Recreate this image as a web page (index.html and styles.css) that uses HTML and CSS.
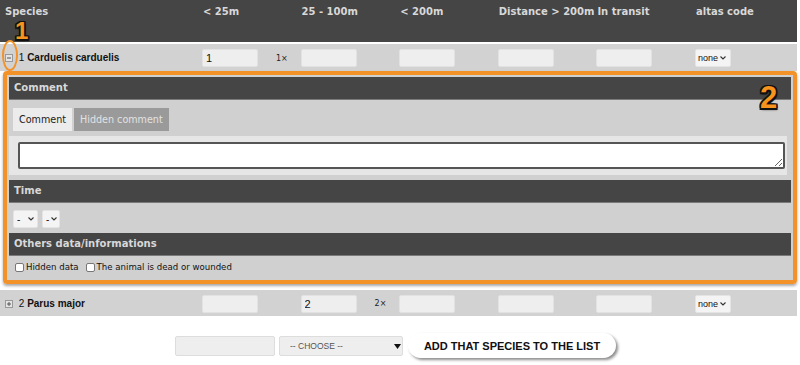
FILE: index.html
```html
<!DOCTYPE html>
<html lang="en">
<head>
    <meta charset="UTF-8">
    <meta name="viewport" content="width=device-width, initial-scale=1.0">
    <title>Species observations</title>
    <link rel="stylesheet" href="styles.css">
</head>
<body>

    <div class="page">
        <table class="species-table">
            <colgroup>
                <col class="col-name">
                <col class="col-num"><col class="col-num"><col class="col-num">
                <col class="col-num"><col class="col-num"><col class="col-code">
            </colgroup>
            <thead>
                <tr>
                    <th class="th-name">Species</th>
                    <th>&lt; 25m</th>
                    <th>25 - 100m</th>
                    <th>&lt; 200m</th>
                    <th>Distance &gt; 200m</th>
                    <th>In transit</th>
                    <th>altas code</th>
                </tr>
            </thead>
            <tbody>
                <tr class="species-row row-open">
                    <td class="name">
                        <svg class="toggle" width="8" height="8" viewBox="0 0 8 8"><rect x="0.5" y="0.5" width="7" height="7" fill="#e4e4e4" stroke="#999"/><path d="M2 4h4" stroke="#555"/></svg>
                        <span class="num">1</span> <b>Carduelis carduelis</b>
                    </td>
                    <td><input class="count" type="text" value="1"><span class="times">1×</span></td>
                    <td><input class="count" type="text"></td>
                    <td><input class="count" type="text"></td>
                    <td><input class="count" type="text"></td>
                    <td><input class="count" type="text"></td>
                    <td>
                        <span class="select-box code-select">
                            <select><option>none</option></select>
                            <svg class="chev" width="6" height="4" viewBox="0 0 6 4"><path d="M0.5 0.5 3 3 5.5 0.5" fill="none" stroke="#333" stroke-width="1.1"/></svg>
                        </span>
                    </td>
                </tr>
                <tr class="detail-row">
                    <td colspan="7">
                        <div class="detail">
                            <div class="detail-inner">
                                <div class="section-head">Comment</div>
                                <div class="tabs">
                                    <span class="tab tab-active">Comment</span>
                                    <span class="tab">Hidden comment</span>
                                </div>
                                <div class="comment-box">
                                    <textarea class="comment"></textarea>
                                </div>

                                <div class="section-head section-gap">Time</div>
                                <div class="time-row">
                                    <span class="select-box time-hour">
                                        <select><option>-</option></select>
                                        <svg class="chev" width="6" height="4" viewBox="0 0 6 4"><path d="M0.5 0.5 3 3 5.5 0.5" fill="none" stroke="#333" stroke-width="1.1"/></svg>
                                    </span>
                                    <span class="select-box time-min">
                                        <select><option>-</option></select>
                                        <svg class="chev" width="6" height="4" viewBox="0 0 6 4"><path d="M0.5 0.5 3 3 5.5 0.5" fill="none" stroke="#333" stroke-width="1.1"/></svg>
                                    </span>
                                </div>

                                <div class="section-head">Others data/informations</div>
                                <div class="check-row">
                                    <label><input type="checkbox">Hidden data</label>
                                    <label><input type="checkbox">The animal is dead or wounded</label>
                                </div>
                            </div>
                        </div>
                    </td>
                </tr>
                <tr class="species-row">
                    <td class="name">
                        <svg class="toggle" width="8" height="8" viewBox="0 0 8 8"><rect x="0.5" y="0.5" width="7" height="7" fill="#e4e4e4" stroke="#999"/><path d="M2 4h4M4 2v4" stroke="#555"/></svg>
                        <span class="num">2</span> <b>Parus major</b>
                    </td>
                    <td><input class="count" type="text"></td>
                    <td><input class="count" type="text" value="2"><span class="times">2×</span></td>
                    <td><input class="count" type="text"></td>
                    <td><input class="count" type="text"></td>
                    <td><input class="count" type="text"></td>
                    <td>
                        <span class="select-box code-select">
                            <select><option>none</option></select>
                            <svg class="chev" width="6" height="4" viewBox="0 0 6 4"><path d="M0.5 0.5 3 3 5.5 0.5" fill="none" stroke="#333" stroke-width="1.1"/></svg>
                        </span>
                    </td>
                </tr>
            </tbody>
        </table>

        <div class="add-form">
            <input class="search" type="text">
            <span class="select-box choose">
                <select><option>-- CHOOSE --</option></select>
                <svg class="arrow" width="7" height="5" viewBox="0 0 7 5"><path d="M0 0h7L3.5 5z" fill="#111"/></svg>
            </span>
            <button class="add-btn">ADD THAT SPECIES TO THE LIST</button>
        </div>

        <!-- annotation marks -->
        <span class="mark mark-1">1</span>
        <span class="ring"></span>
        <span class="mark mark-2">2</span>
    </div>

</body>
</html>
```

FILE: styles.css
```css
body {
    margin: 0;
    font-family: "DejaVu Sans", Verdana, sans-serif;
    background: #fff;
}

.page {
    position: relative;
    width: 797px;
    height: 365px;
}

.species-table {
    width: 797px;
    border-collapse: separate;
    border-spacing: 0;
    table-layout: fixed;
}

.col-name { width: 200px; }
.col-num { width: 98.6px; }

/* header */
.species-table th {
    height: 44px;
    padding: 6px 2px 0 3px;
    box-sizing: border-box;
    vertical-align: top;
    text-align: left;
    background: #454545;
    color: #d8d8d8;
    font-size: 10px;
    line-height: 12px;
    font-weight: bold;
    border-bottom: 2px solid #fff;
    white-space: nowrap;
}

.species-table th.th-name {
    padding-left: 5px;
}

/* species rows */
.species-row td {
    background: #d2d2d2;
    height: 26px;
    padding: 0 0 0 2px;
    box-sizing: border-box;
    vertical-align: middle;
    white-space: nowrap;
}

.row-open td {
    height: 27px;
}

.species-row td.name {
    padding-left: 5px;
    font-family: "Liberation Sans", Arial, sans-serif;
    font-size: 10px;
    color: #111;
}

.toggle {
    vertical-align: -1px;
    margin-right: 3px;
}

.num {
    font-weight: normal;
}

.count {
    width: 56px;
    height: 18px;
    box-sizing: border-box;
    padding: 0 3px;
    border: 1px solid #e2e2e2;
    border-radius: 2px;
    background: #eee;
    font-family: "Liberation Sans", Arial, sans-serif;
    font-size: 11px;
    color: #111;
    vertical-align: middle;
}

.times {
    margin-left: 18px;
    font-size: 8px;
    color: #222;
    vertical-align: middle;
}

/* fake selects */
.select-box {
    position: relative;
    display: inline-block;
    vertical-align: middle;
}

.select-box select {
    appearance: none;
    -webkit-appearance: none;
    height: 18px;
    box-sizing: border-box;
    border: 1px solid #e4e4e4;
    border-radius: 2px;
    background: #f4f4f4;
    font-family: "Liberation Sans", Arial, sans-serif;
    font-size: 10px;
    color: #111;
    padding: 0 0 0 3px;
    display: block;
}

.select-box .chev {
    position: absolute;
    top: 7px;
    pointer-events: none;
}

.code-select select {
    width: 36px;
    font-size: 9px;
    padding-left: 2px;
}
.code-select .chev { left: 25px; }

/* detail panel */
.detail-row td {
    padding: 0 0 6px 3px;
}

.detail {
    border: 4px solid #f39228;
    border-radius: 4px;
    box-shadow: 0 2px 3px rgba(0, 0, 0, 0.35);
}

.detail-inner {
    background: #d0d0d0;
    padding: 2px;
}

.section-head {
    height: 22px;
    line-height: 22px;
    padding-left: 5px;
    background: #454545;
    border-bottom: 1px solid #7a7a7a;
    color: #d8d8d8;
    font-size: 10px;
    font-weight: bold;
}

.section-gap {
    margin-top: 5px;
}

.tabs {
    display: flex;
    gap: 2px;
    padding: 8px 4px 5px;
}

.tab {
    height: 23px;
    line-height: 23px;
    padding: 0 6px;
    font-size: 9.6px;
    color: #e2e2e2;
    background: #9a9a9a;
}

.tab-active {
    color: #222;
    background: #ececec;
}

.comment-box {
    background: #e6e6e6;
    padding: 6px 2px 6px 9px;
    margin-right: 4px;
}

.comment {
    display: block;
    width: 100%;
    height: 27px;
    box-sizing: border-box;
    border: 2px solid #555;
    border-radius: 2px;
    background: #fff;
    margin: 0;
}

.time-row {
    display: flex;
    gap: 4px;
    padding: 7px 4px 5px;
}

.time-hour select { width: 25px; }
.time-hour .chev { left: 15px; }
.time-min select { width: 18px; }
.time-min .chev { left: 9px; }

.check-row {
    display: flex;
    gap: 7px;
    padding: 0 6px;
    height: 22px;
    align-items: center;
    font-size: 8.6px;
    color: #111;
}

.check-row label {
    display: flex;
    align-items: center;
}

.check-row input {
    appearance: none;
    -webkit-appearance: none;
    width: 9px;
    height: 9px;
    margin: 0 2px 0 0;
    border: 1px solid #777;
    border-radius: 2px;
    background: #fff;
}

/* add species form */
.add-form {
    display: flex;
    align-items: center;
    justify-content: center;
    gap: 4px;
    margin-top: 17px;
    padding-right: 6px;
}

.search {
    width: 100px;
    height: 20px;
    box-sizing: border-box;
    border: 1px solid #ddd;
    border-radius: 2px;
    background: #eee;
}

.choose select {
    width: 124px;
    height: 20px;
    background: #eee;
    border-color: #ddd;
    font-size: 8.5px;
    color: #555;
    padding-left: 10px;
}

.choose .arrow {
    position: absolute;
    left: 115px;
    top: 8px;
}

.add-btn {
    margin-left: 1px;
    width: 208px;
    height: 25px;
    border: none;
    border-radius: 13px;
    background: #fff;
    box-shadow: 2px 2px 3px rgba(0, 0, 0, 0.45);
    font-family: "Liberation Sans", Arial, sans-serif;
    font-size: 11px;
    font-weight: bold;
    color: #111;
    cursor: pointer;
}

/* annotations */
.mark {
    position: absolute;
    font-family: "Liberation Sans", Arial, sans-serif;
    font-weight: bold;
    color: #f7941d;
    line-height: 1;
    text-shadow:
        -1.5px -1.5px 0 #111, 1.5px -1.5px 0 #111,
        -1.5px 1.5px 0 #111, 1.5px 1.5px 0 #111,
        0 -1.5px 0 #111, 0 1.5px 0 #111,
        -1.5px 0 0 #111, 1.5px 0 0 #111,
        1px 2px 2px rgba(0, 0, 0, 0.6);
}

.mark-1 {
    left: 15px;
    top: 19px;
    font-size: 24px;
}

.mark-2 {
    left: 760px;
    top: 82px;
    font-size: 31px;
}

.ring {
    position: absolute;
    left: 2px;
    top: 40px;
    width: 12px;
    height: 27px;
    border: 2.5px solid #f39228;
    border-radius: 50%;
}
```
